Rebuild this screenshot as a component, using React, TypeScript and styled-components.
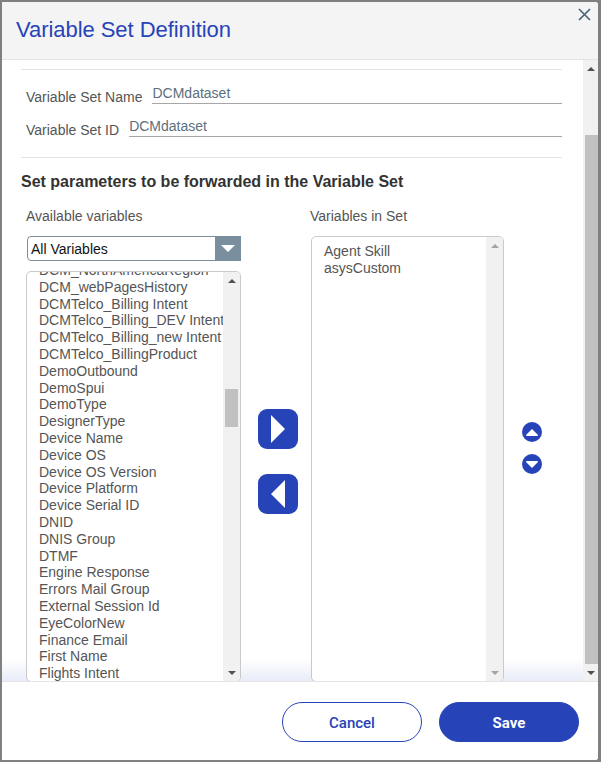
import React from 'react'
import styled, { createGlobalStyle } from 'styled-components'

const GlobalStyle = createGlobalStyle`
    html, body {
        margin: 0;
        padding: 0;
        background: #808080;
    }
    * {
        box-sizing: border-box;
    }
`

const Frame = styled.div`
    width: 601px;
    height: 762px;
    padding: 2px 3px 2px 2px;
    display: flex;
    font-family: "Liberation Sans", Arial, sans-serif;
`

const Dialog = styled.div`
    flex: 1;
    display: flex;
    flex-direction: column;
    position: relative;
    background: #fff;
    border-radius: 0 3px 3px 0;
    overflow: hidden;
`

const Header = styled.div`
    height: 58px;
    flex: none;
    padding: 15px 14px 0;
    background: #f4f4f4;
    border-bottom: 1px solid #e4e4e4;
`

const Title = styled.h1`
    margin: 0;
    font-size: 22px;
    line-height: 26px;
    font-weight: 400;
    color: #2743b8;
    letter-spacing: -0.05px;
`

const CloseButton = styled.button`
    position: absolute;
    top: 6px;
    right: 7px;
    width: 13px;
    height: 13px;
    padding: 0;
    border: 0;
    background: none;
    display: flex;
`

const Body = styled.div`
    flex: 1;
    min-height: 0;
    display: flex;
    background: linear-gradient(to bottom, #fff calc(100% - 22px), #e9ecf9);
`

const Content = styled.div`
    flex: 1;
    min-width: 0;
    padding: 9px 21px 0 19px;
    display: flex;
    flex-direction: column;
`

const Divider = styled.div<{ $top?: number }>`
    height: 1px;
    flex: none;
    margin-top: ${(p) => p.$top ?? 0}px;
    background: #e4e4e4;
`

const FieldRow = styled.div<{ $first?: boolean }>`
    display: flex;
    height: 20px;
    margin-top: ${(p) => (p.$first ? '14px' : '13px')};
    padding-left: 5px;
`

const FieldLabel = styled.label`
    margin: 5px 10px 0 0;
    font-size: 14px;
    line-height: 16px;
    color: #555;
`

const FieldInput = styled.input`
    flex: 1;
    min-width: 0;
    height: 20px;
    padding: 1px 0 2px;
    border: 0;
    border-bottom: 1px solid #a6a6a6;
    outline: none;
    background: none;
    font: 14px/16px "Liberation Sans", Arial, sans-serif;
    color: #5c6f7c;
`

const SectionTitle = styled.h2`
    margin: 14px 0 0;
    font-size: 16px;
    line-height: 20px;
    font-weight: 700;
    color: #333;
`

const Columns = styled.div`
    flex: 1;
    min-height: 0;
    margin: 16px 0 -1px;
    display: flex;
`

const ListColumn = styled.div<{ $width: number }>`
    width: ${(p) => p.$width}px;
    flex: none;
    display: flex;
    flex-direction: column;
`

const ColumnLabel = styled.div<{ $left: number }>`
    margin-left: ${(p) => p.$left}px;
    font-size: 14px;
    line-height: 16px;
    color: #555;
`

const Dropdown = styled.div`
    height: 25px;
    margin: 12px 0 10px 6px;
    display: flex;
    border: 1px solid #7a8f9e;
    border-radius: 4px 0 0 4px;
`

const DropdownValue = styled.div`
    flex: 1;
    padding: 1px 0 0 3px;
    font-size: 14px;
    line-height: 23px;
    color: #111;
`

const DropdownArrow = styled.div`
    width: 26px;
    margin: -1px -1px -1px 0;
    display: flex;
    align-items: center;
    justify-content: center;
    background: #7a8f9e;

    &::after {
        content: '';
        border-style: solid;
        border-width: 7px 7px 0;
        border-color: #fff transparent transparent;
    }
`

const ListBox = styled.div<{ $top?: number; $left?: number }>`
    flex: 1;
    min-height: 0;
    margin-top: ${(p) => p.$top ?? 0}px;
    margin-left: ${(p) => p.$left ?? 0}px;
    display: flex;
    background: #fff;
    border: 1px solid #cacaca;
    border-radius: 5px;
    overflow: hidden;
`

const ListItems = styled.div<{ $offset: number; $left: number }>`
    flex: 1;
    min-width: 0;
    margin-top: ${(p) => p.$offset}px;
    padding-left: ${(p) => p.$left}px;
`

const ListItem = styled.div`
    font-size: 14px;
    line-height: 16.8px;
    white-space: nowrap;
    color: #555;
`

const ScrollBar = styled.div<{ $width: number }>`
    width: ${(p) => p.$width}px;
    flex: none;
    display: flex;
    flex-direction: column;
    background: #f1f1f1;
`

const ScrollArrow = styled.div<{ $down?: boolean; $muted?: boolean }>`
    height: 17px;
    flex: none;
    display: flex;
    align-items: center;
    justify-content: center;

    &::after {
        content: '';
        border-style: solid;
        border-color: transparent;
        border-width: ${(p) => (p.$down ? '4px 4px 0' : '0 4px 4px')};
        ${(p) => (p.$down ? 'border-top-color' : 'border-bottom-color')}: ${(p) => (p.$muted ? '#a3a3a3' : '#505050')};
    }
`

const ScrollTrack = styled.div`
    flex: 1;
    min-height: 0;
    display: flex;
    flex-direction: column;
`

const ScrollThumb = styled.div<{ $top: number; $height?: number; $left: number; $right: number }>`
    margin: ${(p) => p.$top}px ${(p) => p.$right}px 0 ${(p) => p.$left}px;
    ${(p) => (p.$height ? `height: ${p.$height}px;` : 'flex: 1;')}
    background: #c1c1c1;
`

const TransferColumn = styled.div`
    width: 70px;
    flex: none;
    padding: 201px 0 0 17px;
    display: flex;
    flex-direction: column;
    gap: 25px;
`

const TransferButton = styled.button`
    width: 40px;
    height: 40px;
    padding: 0;
    border: 0;
    border-radius: 9px;
    background: #2743b8;
    display: flex;
    align-items: center;
    justify-content: center;
`

const OrderColumn = styled.div`
    padding: 214px 0 0 18px;
    display: flex;
    flex-direction: column;
    gap: 12px;
`

const OrderButton = styled.button`
    width: 20px;
    height: 20px;
    padding: 0;
    border: 0;
    border-radius: 50%;
    background: #2743b8;
    display: flex;
    align-items: center;
    justify-content: center;
`

const Footer = styled.div`
    height: 79px;
    flex: none;
    position: relative;
    padding: 20px 19px 0 0;
    border-top: 1px solid #e4e4e4;
    display: flex;
    justify-content: flex-end;
    gap: 17px;
    background: #fff;
`

const PillButton = styled.button<{ $primary?: boolean }>`
    width: 140px;
    height: 40px;
    padding: 2px 0 0;
    border: 1px solid #2743b8;
    border-radius: 20px;
    background: ${(p) => (p.$primary ? '#2743b8' : '#fff')};
    color: ${(p) => (p.$primary ? '#fff' : '#2743b8')};
    font-family: Roboto, "Liberation Sans", sans-serif;
    font-size: 15px;
    font-weight: ${(p) => (p.$primary ? 700 : 500)};
`

const available = [
    'DCM_NorthAmericaRegion',
    'DCM_webPagesHistory',
    'DCMTelco_Billing Intent',
    'DCMTelco_Billing_DEV Intent',
    'DCMTelco_Billing_new Intent',
    'DCMTelco_BillingProduct',
    'DemoOutbound',
    'DemoSpui',
    'DemoType',
    'DesignerType',
    'Device Name',
    'Device OS',
    'Device OS Version',
    'Device Platform',
    'Device Serial ID',
    'DNID',
    'DNIS Group',
    'DTMF',
    'Engine Response',
    'Errors Mail Group',
    'External Session Id',
    'EyeColorNew',
    'Finance Email',
    'First Name',
    'Flights Intent',
]

const selected = ['Agent Skill', 'asysCustom']

const App: React.FC = () => {
    return (
        <Frame>
            <GlobalStyle />
            <Dialog>
                <Header>
                    <Title>Variable Set Definition</Title>
                </Header>
                <CloseButton aria-label="Close">
                    <svg width="13" height="13" viewBox="0 0 13 13">
                        <path d="M1 1 L12 12 M12 1 L1 12" stroke="#456173" strokeWidth="1.6" fill="none" />
                    </svg>
                </CloseButton>
                <Body>
                    <Content>
                        <Divider />
                        <FieldRow $first>
                            <FieldLabel>Variable Set Name</FieldLabel>
                            <FieldInput readOnly value="DCMdataset" />
                        </FieldRow>
                        <FieldRow>
                            <FieldLabel>Variable Set ID</FieldLabel>
                            <FieldInput readOnly value="DCMdataset" />
                        </FieldRow>
                        <Divider $top={20} />
                        <SectionTitle>Set parameters to be forwarded in the Variable Set</SectionTitle>
                        <Columns>
                            <ListColumn $width={220}>
                                <ColumnLabel $left={5}>Available variables</ColumnLabel>
                                <Dropdown>
                                    <DropdownValue>All Variables</DropdownValue>
                                    <DropdownArrow />
                                </Dropdown>
                                <ListBox $left={5}>
                                    <ListItems $offset={-10} $left={12}>
                                        {available.map((name) => (
                                            <ListItem key={name}>{name}</ListItem>
                                        ))}
                                    </ListItems>
                                    <ScrollBar $width={17}>
                                        <ScrollArrow />
                                        <ScrollTrack>
                                            <ScrollThumb $top={100} $height={38} $left={2} $right={2} />
                                        </ScrollTrack>
                                        <ScrollArrow $down />
                                    </ScrollBar>
                                </ListBox>
                            </ListColumn>
                            <TransferColumn>
                                <TransferButton aria-label="Add">
                                    <svg width="14" height="28" viewBox="0 0 14 28">
                                        <path d="M0 0 L14 14 L0 28 Z" fill="#fff" />
                                    </svg>
                                </TransferButton>
                                <TransferButton aria-label="Remove">
                                    <svg width="14" height="28" viewBox="0 0 14 28">
                                        <path d="M14 0 L0 14 L14 28 Z" fill="#fff" />
                                    </svg>
                                </TransferButton>
                            </TransferColumn>
                            <ListColumn $width={193}>
                                <ColumnLabel $left={-1}>Variables in Set</ColumnLabel>
                                <ListBox $top={12}>
                                    <ListItems $offset={6} $left={12}>
                                        {selected.map((name) => (
                                            <ListItem key={name}>{name}</ListItem>
                                        ))}
                                    </ListItems>
                                    <ScrollBar $width={17}>
                                        <ScrollArrow $muted />
                                        <ScrollTrack />
                                        <ScrollArrow $down $muted />
                                    </ScrollBar>
                                </ListBox>
                            </ListColumn>
                            <OrderColumn>
                                <OrderButton aria-label="Move up">
                                    <svg width="12" height="7" viewBox="0 0 12 7">
                                        <path d="M6 0 L12 6 Q12 7 11 7 L1 7 Q0 7 0 6 Z" fill="#fff" />
                                    </svg>
                                </OrderButton>
                                <OrderButton aria-label="Move down">
                                    <svg width="12" height="7" viewBox="0 0 12 7">
                                        <path d="M1 0 L11 0 Q12 0 12 1 L6 7 L0 1 Q0 0 1 0 Z" fill="#fff" />
                                    </svg>
                                </OrderButton>
                            </OrderColumn>
                        </Columns>
                    </Content>
                    <ScrollBar $width={15}>
                        <ScrollArrow />
                        <ScrollTrack>
                            <ScrollThumb $top={58} $left={2} $right={0} />
                        </ScrollTrack>
                        <ScrollArrow $down />
                    </ScrollBar>
                </Body>
                <Footer>
                    <PillButton>Cancel</PillButton>
                    <PillButton $primary>Save</PillButton>
                </Footer>
            </Dialog>
        </Frame>
    )
}

export default App
